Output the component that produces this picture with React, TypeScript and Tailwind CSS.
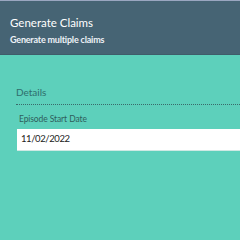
export default function App() {
  return (
    <div className="w-[240px] h-[240px] overflow-hidden bg-[#5dd0bb]" style={{ fontFamily: "Lato, 'Open Sans', sans-serif" }}>
      <div className="border-t border-[#9aa6c0] bg-[#466474] h-[55px] pl-[10px] pt-[15px] border-b border-b-[#3f5c6a]">
        <div className="text-white text-[11.5px] leading-[14px]">Generate Claims</div>
        <div className="text-[#eef2f8] text-[9px] font-bold leading-[10px] mt-[5px] tracking-[-0.2px]">Generate multiple claims</div>
      </div>
      <div className="pl-[16px] pt-[31px]">
        <div className="text-[#2f6e6c] text-[10px] leading-[12px]">Details</div>
        <div className="mt-[6px] border-t border-dotted border-[#3a6a6a] h-0" />
        <div className="pl-[3px] mt-[9px] text-[#2f5e5c] text-[8.5px] leading-[10px] tracking-[-0.1px]">Episode Start Date</div>
        <div className="ml-[1px] mt-[5px] bg-white h-[22px] flex items-center pl-[4px] text-[#222] text-[9.5px] tracking-[-0.4px] border-b border-[#cfe9e4]">11/02/2022</div>
      </div>
    </div>
  );
}
